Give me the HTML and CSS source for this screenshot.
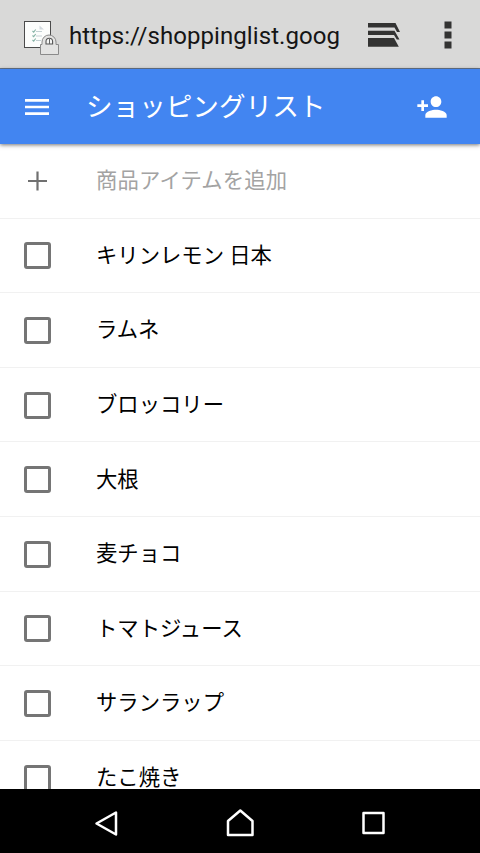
FILE: index.html
```html
<!DOCTYPE html>
<html lang="ja">
<head>
<meta charset="utf-8">
<meta name="viewport" content="width=device-width">
<title>ショッピングリスト</title>
<link rel="stylesheet" href="styles.css">
</head>
<body>
<div class="screen">
  <div class="browser-bar">
    <svg class="site-icon" width="37" height="36" viewBox="0 0 37 36">
      <rect x="1.500" y="1.500" width="26" height="26" fill="#fcfdfc" stroke="#4b4b4b" stroke-width="1"/>
      <path d="M16.500 5.500v4h4.500z" fill="#d2d9de"/>
      <g stroke="#c3d0d3" stroke-width="1.200"><path d="M13 11.500h6M13 16h6M13 20.500h5"/></g>
      <g fill="none" stroke="#86b3a6" stroke-width="1.100"><path d="M9.500 11l1.200 1.200 2-2.700M9.500 15.500l1.200 1.200 2-2.700M9.500 20l1.200 1.200 2-2.700"/></g>
      <path d="M17.500 24.500h1.500v-2.500a7 7 0 0 1 14 0v2.500h2.500v10H17.500z" fill="#e3e3e2" stroke="#8a8a8a" stroke-width="1"/>
      <path d="M23 24v-2.500a3.300 3.300 0 0 1 6.600 0v2.500z" fill="#f5f6f5" stroke="#555" stroke-width="1.100"/>
      <path d="M26.500 19v5" stroke="#666" stroke-width="1"/>
    </svg>
    <div class="url">https://shoppinglist.goog</div>
    <svg class="tabs-icon" width="33" height="26" viewBox="0 0 33 26" fill="#333332">
      <path d="M0 1h27.500l4.500 9h-3l-2.500-4.500H0z"/>
      <path d="M0 8.800h26.500l5 8.700h-2.700l-2.800-4.500H0z"/>
      <path d="M0 16h26l4.800 8.800H0z"/>
    </svg>
    <svg class="more-icon" width="8" height="28" viewBox="0 0 8 28" fill="#333332">
      <rect x=".5" y=".5" width="7" height="7"/><rect x=".5" y="10.500" width="7" height="7"/><rect x=".5" y="20.500" width="7" height="7"/>
    </svg>
  </div>
  <header class="app-bar">
    <svg class="menu-icon" width="32" height="32" viewBox="0 0 24 24" fill="#fff"><path d="M3 18h18v-2H3v2zm0-5h18v-2H3v2zm0-7v2h18V6H3z"/></svg>
    <h1 class="title">ショッピングリスト</h1>
    <svg class="share-icon" width="32" height="32" viewBox="0 0 24 24" fill="#fff"><path d="M15 12c2.210 0 4-1.790 4-4s-1.790-4-4-4-4 1.790-4 4 1.790 4 4 4zm-9-2V7H4v3H1v2h3v3h2v-3h3v-2H6zm9 4c-2.670 0-8 1.340-8 4v2h16v-2c0-2.660-5.330-4-8-4z"/></svg>
  </header>
  <main class="list">
    <div class="row add"><svg class="plus" width="27" height="27" viewBox="0 0 27 27"><path d="M4 14h19M13.500 4.500v19" stroke="#707070" stroke-width="2.200"/></svg><span class="label">商品アイテムを追加</span></div>
    <div class="row"><span class="box"></span><span class="label">キリンレモン 日本</span></div>
    <div class="row"><span class="box"></span><span class="label">ラムネ</span></div>
    <div class="row"><span class="box"></span><span class="label">ブロッコリー</span></div>
    <div class="row"><span class="box"></span><span class="label">大根</span></div>
    <div class="row"><span class="box"></span><span class="label">麦チョコ</span></div>
    <div class="row"><span class="box"></span><span class="label">トマトジュース</span></div>
    <div class="row"><span class="box"></span><span class="label">サランラップ</span></div>
    <div class="row"><span class="box"></span><span class="label">たこ焼き</span></div>
  </main>
  <nav class="nav-bar">
    <svg width="28" height="30" viewBox="0 0 28 30"><path d="M3.500 15.500L23 4.500v22z"/></svg>
    <svg width="28" height="30" viewBox="0 0 28 30"><path d="M2 27V13L14.300 2.500 26.500 13v14z"/></svg>
    <svg width="28" height="30" viewBox="0 0 28 30"><path d="M4.500 5h20v20h-20z"/></svg>
  </nav>
</div>
</body>
</html>
```

FILE: styles.css
```css
* { box-sizing: border-box; }
body {
  margin: 0;
  background: #fff;
  font-family: Roboto, "Noto Sans CJK JP", sans-serif;
}
svg { display: block; flex: none; }
.screen {
  height: 853px;
  display: flex;
  flex-direction: column;
  overflow: hidden;
}
.browser-bar {
  flex: none;
  height: 69px;
  display: flex;
  align-items: flex-start;
  padding: 20px 28px 0 23px;
  background: #d9d9d8;
  border-bottom: 1px solid #68788f;
}
.url {
  width: 274px;
  margin: 2px 25px 0 9px;
  font-size: 24px;
  letter-spacing: .08px;
  line-height: 28px;
  color: #151515;
  white-space: nowrap;
}
.tabs-icon { margin-top: 2px; }
.more-icon { margin: 1px 0 0 auto; }
.app-bar {
  flex: none;
  z-index: 1;
  height: 75px;
  display: flex;
  align-items: center;
  padding: 0 32px 0 21px;
  background: #4285f1;
  box-shadow: 0 1px 4px rgba(0, 0, 0, .55);
}
.title {
  flex: 1;
  margin: 0 0 0 33px;
  font-size: 26.600px;
  font-weight: 400;
  line-height: 40px;
  color: #fff;
}
.list {
  flex: 1;
  min-height: 0;
  overflow: hidden;
}
.row {
  display: flex;
  align-items: center;
  gap: 45px;
  height: 74.600px;
  padding: 0 24px;
  border-bottom: 1px solid #f1f1f1;
  font-size: 21.330px;
  line-height: 30px;
  color: #000;
}
.label { padding-top: 1px; }
.add {
  color: #a3a3a3;
  letter-spacing: .16px;
}
.box {
  width: 27px;
  height: 27px;
  margin-top: 1px;
  border: 3px solid #757575;
  border-radius: 3px;
}
.nav-bar {
  flex: none;
  height: 64px;
  display: flex;
  align-items: center;
  justify-content: space-between;
  padding: 4px 93px 0;
  background: #000;
}
.nav-bar path {
  fill: none;
  stroke: #fff;
  stroke-width: 2.500;
  stroke-linejoin: round;
}
```
